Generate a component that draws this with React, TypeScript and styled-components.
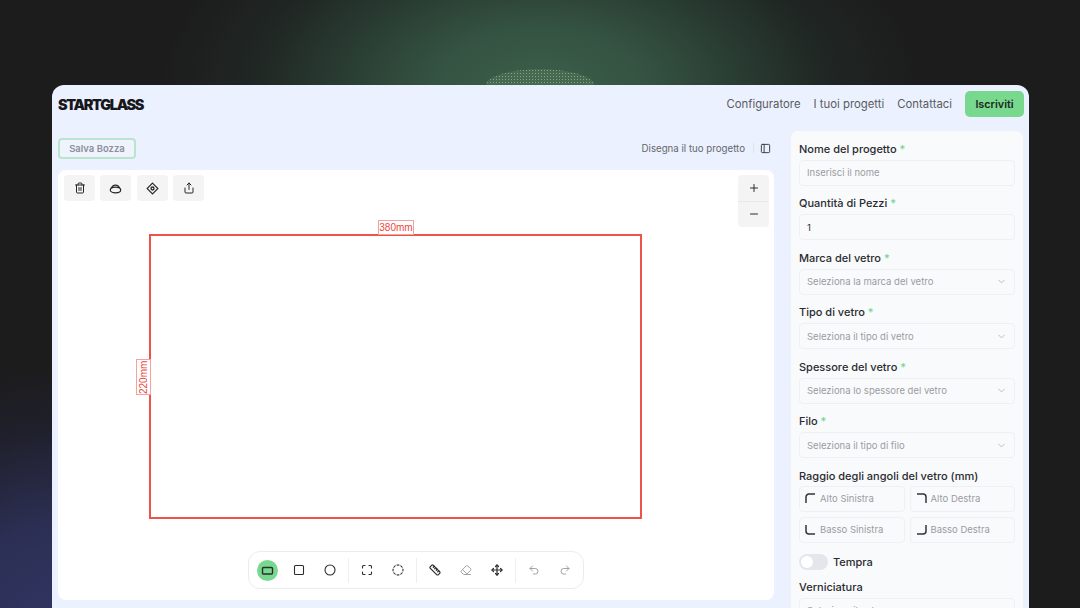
import React from "react";
import styled, { createGlobalStyle } from "styled-components";
import { Trash2, Share, PanelLeft, Plus, Minus, ChevronDown, Square, Circle, Undo2, Redo2, Move, Eraser, Ruler, Maximize, CircleDashed } from "lucide-react";

const Global = createGlobalStyle`
  html, body { margin: 0; height: 100%; overflow: hidden; }
  * { box-sizing: border-box; }
  body {
    font-family: "Inter", "Noto Sans", sans-serif;
    background:
      radial-gradient(ellipse 380px 220px at 540px 90px, rgba(60,96,74,1) 0%, rgba(54,86,68,0.95) 28%, rgba(46,72,58,0.75) 52%, rgba(36,50,44,0.45) 76%, rgba(28,28,28,0) 100%),
      radial-gradient(ellipse 250px 300px at 60px 660px, rgba(50,54,102,1) 0%, rgba(46,49,90,0.9) 45%, rgba(34,35,58,0.5) 78%, rgba(28,28,28,0) 100%),
      #1c1c1c;
  }
`;

const Stage = styled.div`
  width: 1080px;
  height: 608px;
  padding: 85px 51px 0 52px;
  overflow: hidden;
  position: relative;
`;
const Glow = styled.div`
  position: absolute;
  left: 486px;
  top: 69px;
  width: 108px;
  height: 32px;
  border-radius: 50%;
  background:
    radial-gradient(circle, #7ea58c 0.7px, transparent 0.9px) 0 0 / 3px 3px,
    #47694f;
`;
const Card = styled.div`
  position: relative;
  height: 560px;
  background: #ebf1fe;
  border-radius: 12px 12px 0 0;
  padding: 6px 5px 0 6px;
  display: flex;
  flex-direction: column;
`;
const Header = styled.header`
  display: flex;
  align-items: center;
  justify-content: space-between;
  height: 26px;
`;
const Logo = styled.div`
  font-weight: 900;
  font-size: 14.5px;
  letter-spacing: -1.35px;
  color: #17171c;
`;
const Nav = styled.nav`
  display: flex;
  align-items: center;
  gap: 13px;
`;
const NavLink = styled.a`
  font-size: 11.35px;
  color: #5a5b61;
`;
const CTA = styled.button`
  border: 0;
  background: #78d88e;
  border-radius: 5px;
  width: 59px;
  height: 26px;
  padding: 0;
  font: 600 10.8px "Inter", sans-serif;
  color: #1c2a20;
`;
const Body = styled.div`
  display: flex;
  gap: 16px;
  margin-top: 13px;
  flex: 1;
  min-height: 0;
`;
const Left = styled.div`
  width: 716px;
  display: flex;
  flex-direction: column;
`;
const ActionRow = styled.div`
  display: flex;
  align-items: center;
  justify-content: space-between;
  height: 32px;
  padding-top: 4px;
  margin-bottom: 8px;
`;
const DraftBtn = styled.button`
  width: 78px;
  height: 21px;
  padding: 0;
  background: #eef3fd;
  border: 2px solid #b9e6c8;
  border-radius: 4px;
  font: 600 9.5px "Inter", sans-serif;
  color: #8b8f99;
`;
const RowRight = styled.div`
  display: flex;
  align-items: center;
  color: #66676c;
  font-size: 9.7px;
`;
const Sep = styled.span`
  width: 1px;
  height: 10px;
  background: #dfe3ea;
  margin: 0 6px 0 8px;
`;
const PanelIcon = styled(PanelLeft)`
  color: #33343a;
  margin-right: 3px;
`;
const Canvas = styled.div`
  position: relative;
  width: 716px;
  height: 430px;
  background: #fff;
  border-radius: 8px;
`;
const TopTools = styled.div`
  position: absolute;
  left: 6px;
  top: 5px;
  display: flex;
  gap: 5.4px;
`;
const ToolBtn = styled.button`
  width: 31px;
  height: 26px;
  padding: 0;
  border: 0;
  border-radius: 4px;
  background: #f4f4f5;
  display: flex;
  align-items: center;
  justify-content: center;
  color: #26272b;
`;
const Zoom = styled.div`
  position: absolute;
  right: 5px;
  top: 5px;
  width: 31px;
  height: 52px;
  border-radius: 4px;
  background: #f4f4f5;
  display: flex;
  flex-direction: column;
`;
const ZoomBtn = styled.div<{ $top?: boolean }>`
  flex: 1;
  display: flex;
  align-items: center;
  justify-content: center;
  color: #2b2c30;
  border-bottom: ${(p) => (p.$top ? "1px solid #ebe6e8" : "0")};
`;
const Shape = styled.div`
  position: absolute;
  left: 91px;
  top: 64px;
  width: 493px;
  height: 285px;
  border: 2px solid #ea544a;
`;
const WidthLabel = styled.div`
  position: absolute;
  left: 320px;
  top: 50px;
  width: 36px;
  height: 15px;
  background: #fff;
  border: 1px solid #f6a19b;
  color: #e8473d;
  font: 10px/13px "Liberation Sans", sans-serif;
  text-align: center;
`;
const HeightLabel = styled.div`
  position: absolute;
  left: 78px;
  top: 189px;
  width: 15px;
  height: 36px;
  background: #fff;
  border: 1px solid #f6a19b;
  color: #e8473d;
  font: 10px/13px "Liberation Sans", sans-serif;
  text-align: center;
  writing-mode: vertical-rl;
  transform: rotate(180deg);
`;
const Dock = styled.div`
  position: absolute;
  left: 190px;
  top: 381px;
  width: 336px;
  height: 38px;
  background: #fff;
  border: 1px solid #ebecef;
  border-radius: 12px;
  display: flex;
  align-items: center;
  padding-left: 3px;
`;
const DockBtn = styled.div<{ $active?: boolean; $muted?: boolean }>`
  width: 21px;
  height: 21px;
  flex: none;
  border-radius: 50%;
  display: flex;
  align-items: center;
  justify-content: center;
  background: ${(p) => (p.$active ? "#78d88e" : "transparent")};
  color: ${(p) => (p.$muted ? "#a0a2a8" : "#2b2c30")};
  margin: 0 5px;
`;
const DockSep = styled.span`
  width: 1px;
  height: 25px;
  flex: none;
  background: #eceef1;
  margin: 0 2px 0 3px;
`;
const Side = styled.aside`
  width: 234px;
  background: #f9fafb;
  border-radius: 8px 8px 0 0;
  padding: 8.5px 8px 0 8px;
  overflow: hidden;
  height: 479px;
  border: 1px solid #eef1f6;
  border-bottom: 0;
`;
const Label = styled.label`
  display: block;
  font-size: 11px;
  font-weight: 500;
  color: #2a2b30;
  line-height: 18px;
`;
const Star = styled.span`
  color: #6fd68a;
`;
const Field = styled.div<{ $filled?: boolean }>`
  height: 26px;
  margin: 2px 0 8.5px;
  background: #f9fafb;
  border: 1px solid #eff0f3;
  border-radius: 4px;
  display: flex;
  align-items: center;
  justify-content: space-between;
  padding: 0 7px;
  font-size: 9.5px;
  color: ${(p) => (p.$filled ? "#2a2b30" : "#9a9ca3")};
`;
const Chevron = styled(ChevronDown)`
  color: #b5b7bc;
`;
const Corners = styled.div`
  display: grid;
  grid-template-columns: 1fr 1fr;
  gap: 5px;
  margin-top: 1px;
`;
const Corner = styled.div`
  height: 26px;
  border: 1px solid #eff0f3;
  border-radius: 4px;
  display: flex;
  align-items: center;
  gap: 4px;
  padding-left: 5px;
  font-size: 9.5px;
  color: #9a9ca3;
`;
const ToggleRow = styled.div`
  display: flex;
  align-items: center;
  gap: 5px;
  margin: 11px 0 8px;
  font-size: 11px;
  font-weight: 500;
  color: #2a2b30;
  line-height: 16px;
`;
const Toggle = styled.div`
  width: 29px;
  height: 16px;
  border-radius: 8px;
  background: #e4e6ec;
  padding: 2px;
`;
const Knob = styled.div`
  width: 12px;
  height: 12px;
  border-radius: 50%;
  background: #fff;
`;

const CornerIcon = ({ d }: { d: string }) => (
  <svg width="11" height="11" viewBox="0 0 11 11" fill="none" stroke="#33343a" strokeWidth="1.5">
    <path d={d} />
  </svg>
);
const Blob = () => (
  <svg width="13" height="13" viewBox="0 0 14 14" fill="none" stroke="currentColor" strokeWidth="1.3">
    <ellipse cx="7" cy="8.6" rx="5.6" ry="3" />
    <path d="M2.8 6.8C3.2 4.6 5 3.4 7 3.4s3.800 1.200 4.200 3.400" />
  </svg>
);
const Target = () => (
  <svg width="13" height="13" viewBox="0 0 14 14" fill="none" stroke="currentColor" strokeWidth="1.2">
    <path d="M7 1.200 12.800 7 7 12.800 1.200 7z" />
    <circle cx="7" cy="7" r="1.600" strokeWidth="1.400" />
  </svg>
);
const Wide = () => (
  <svg width="13" height="13" viewBox="0 0 13 13" fill="none" stroke="currentColor" strokeWidth="1.4">
    <rect x="1.500" y="3.500" width="10" height="6.500" rx="1" />
  </svg>
);

const selects = [
  ["Marca del vetro", "Seleziona la marca del vetro"],
  ["Tipo di vetro", "Seleziona il tipo di vetro"],
  ["Spessore del vetro", "Seleziona lo spessore del vetro"],
  ["Filo", "Seleziona il tipo di filo"],
];

export default function App() {
  return (
    <Stage>
      <Global />
      <Glow />
      <Card>
        <Header>
          <Logo>STARTGLASS</Logo>
          <Nav>
            <NavLink>Configuratore</NavLink>
            <NavLink>I tuoi progetti</NavLink>
            <NavLink>Contattaci</NavLink>
            <CTA>Iscriviti</CTA>
          </Nav>
        </Header>
        <Body>
          <Left>
            <ActionRow>
              <DraftBtn>Salva Bozza</DraftBtn>
              <RowRight>
                Disegna il tuo progetto
                <Sep />
                <PanelIcon size={11} />
              </RowRight>
            </ActionRow>
            <Canvas>
              <TopTools>
                <ToolBtn><Trash2 size={12} /></ToolBtn>
                <ToolBtn><Blob /></ToolBtn>
                <ToolBtn><Target /></ToolBtn>
                <ToolBtn><Share size={12} /></ToolBtn>
              </TopTools>
              <Zoom>
                <ZoomBtn $top><Plus size={12} /></ZoomBtn>
                <ZoomBtn><Minus size={12} /></ZoomBtn>
              </Zoom>
              <Shape />
              <WidthLabel>380mm</WidthLabel>
              <HeightLabel>220mm</HeightLabel>
              <Dock>
                <DockBtn $active><Wide /></DockBtn>
                <DockBtn><Square size={12} strokeWidth={2.2} /></DockBtn>
                <DockBtn><Circle size={12} strokeWidth={2.2} /></DockBtn>
                <DockSep />
                <DockBtn><Maximize size={12} strokeWidth={2.2} /></DockBtn>
                <DockBtn><CircleDashed size={12} strokeWidth={2.2} /></DockBtn>
                <DockSep />
                <DockBtn><Ruler size={12} strokeWidth={2.4} /></DockBtn>
                <DockBtn $muted><Eraser size={12} /></DockBtn>
                <DockBtn><Move size={12} strokeWidth={2.4} /></DockBtn>
                <DockSep />
                <DockBtn $muted><Undo2 size={12} /></DockBtn>
                <DockBtn $muted><Redo2 size={12} /></DockBtn>
              </Dock>
            </Canvas>
          </Left>
          <Side>
            <Label>Nome del progetto <Star>*</Star></Label>
            <Field>Inserisci il nome</Field>
            <Label>Quantità di Pezzi <Star>*</Star></Label>
            <Field $filled>1</Field>
            {selects.map(([l, p]) => (
              <React.Fragment key={l}>
                <Label>{l} <Star>*</Star></Label>
                <Field>{p}<Chevron size={11} /></Field>
              </React.Fragment>
            ))}
            <Label>Raggio degli angoli del vetro (mm)</Label>
            <Corners>
              <Corner><CornerIcon d="M1 10V4a3 3 0 0 1 3-3h6" />Alto Sinistra</Corner>
              <Corner><CornerIcon d="M1 1h6a3 3 0 0 1 3 3v6" />Alto Destra</Corner>
              <Corner><CornerIcon d="M1 1v6a3 3 0 0 0 3 3h6" />Basso Sinistra</Corner>
              <Corner><CornerIcon d="M10 1v6a3 3 0 0 1-3 3H1" />Basso Destra</Corner>
            </Corners>
            <ToggleRow><Toggle><Knob /></Toggle>Tempra</ToggleRow>
            <Label>Verniciatura</Label>
            <Field>Seleziona il colore<Chevron size={11} /></Field>
          </Side>
        </Body>
      </Card>
    </Stage>
  );
}
